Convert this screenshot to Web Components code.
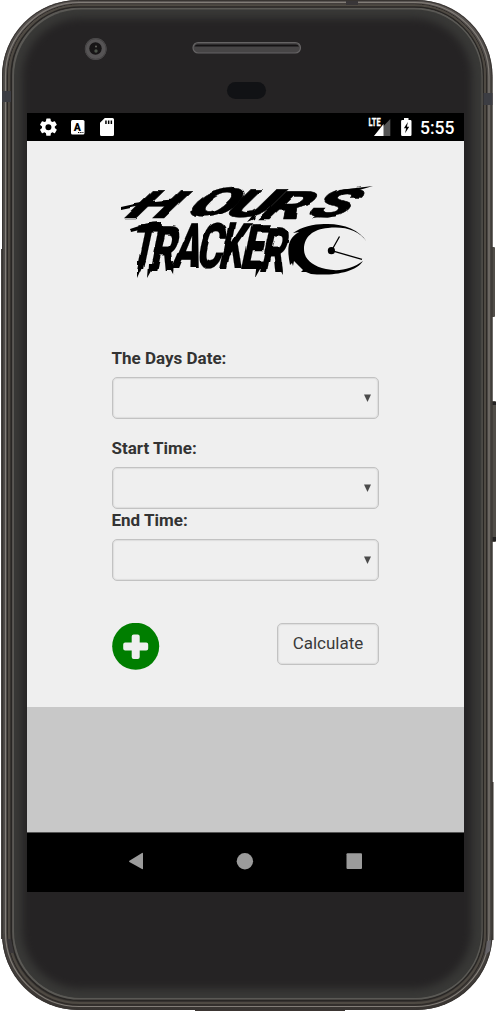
<!DOCTYPE html>
<html lang="en">
<head>
<meta charset="utf-8">
<title>Hours Tracker</title>
<style>
html,body{margin:0;height:100%;overflow:hidden;background:#fff;font-family:Roboto,"Liberation Sans",sans-serif}
</style>
</head>
<body>
<phone-frame>
  <status-bar>5:55</status-bar>
  <tracker-page>
    <hours-logo></hours-logo>
    <select-field style="margin-top:66px">The Days Date:</select-field>
    <select-field style="margin-top:18px">Start Time:</select-field>
    <select-field>End Time:</select-field>
    <form-actions>Calculate</form-actions>
  </tracker-page>
  <nav-bar></nav-bar>
</phone-frame>
<script>
const define = (name, html) => {
  const t = document.createElement('template');
  t.innerHTML = html;
  customElements.define(name, class extends HTMLElement {
    constructor() {
      super();
      this.attachShadow({mode: 'open'}).append(t.content.cloneNode(true));
    }
  });
};

define('phone-frame', `<style>
:host{display:block;position:relative;width:498px;height:1014px;overflow:hidden}
.art{position:absolute;inset:0}
.head{position:relative;height:113px}
.screen{position:relative;width:437px;height:779px;margin-left:27px;display:flex;flex-direction:column;background:#000}
</style>
<svg class="art" width="498" height="1014" viewBox="0 0 498 1014">
<defs>
<filter id="soft" color-interpolation-filters="sRGB" x="-5%" y="-5%" width="110%" height="110%"><feGaussianBlur stdDeviation="4"/></filter>
<linearGradient id="rim" x1="0" x2="0" y1="0" y2="1"><stop offset="0" stop-color="#5b5654"/><stop offset=".08" stop-color="#494643"/><stop offset=".92" stop-color="#494643"/><stop offset="1" stop-color="#393532"/></linearGradient>
<clipPath id="face"><rect x="14" y="9.500" width="467.500" height="988.500" rx="67"/></clipPath>
</defs>
<rect x="490" y="247" width="5" height="70" rx="1" fill="#514e49"/>
<rect x="490" y="401" width="6" height="141" rx="1" fill="#514e49"/>
<path d="M490 402h6v3h-6zM490 537h6v4h-6z" fill="#242323"/>
<rect x="1" y="249" width="3" height="690" fill="#45423f"/>
<rect x="489" y="782" width="4.500" height="158" fill="#37332f"/>
<rect x="195" y="1004" width="150" height="7" fill="#3b3532"/>
<rect x="2" y="0" width="490.500" height="1010" rx="76" fill="url(#rim)"/>
<rect x="2.500" y=".5" width="489.500" height="1009" rx="76" fill="none" stroke="#383431"/>
<rect x="5.500" y="2.500" width="483.500" height="1004" rx="74" fill="none" stroke="#827d77" stroke-width="1.200"/>
<rect x="7.500" y="4" width="479" height="1001" rx="72" fill="none" stroke="#2d2926" stroke-width="1"/>
<rect x="9" y="5.500" width="476" height="997.500" rx="71" fill="none" stroke="#4f4a43" stroke-width="2"/>
<rect x="11.200" y="7" width="472" height="993.500" rx="69" fill="none" stroke="#282624" stroke-width="1.600"/>
<rect x="13.500" y="9" width="468" height="989.500" rx="67" fill="none" stroke="#5a5955" stroke-width="2.200"/>
<g clip-path="url(#face)"><rect x="14" y="9" width="468" height="990" fill="#393937"/>
<rect x="22" y="18" width="450" height="971" rx="60" fill="#252324" filter="url(#soft)"/></g>
<path d="M2 91h9v11H2zM483.500 93h9v12h-9z" fill="#3c3d43"/>
<path d="M346 1h12v4h-12zM7 939h4l3 14h-4z" fill="#393638"/>
<path d="M487 941l4-1-1 11-5 4z" fill="#666469"/>
<circle cx="95.700" cy="49" r="10.900" fill="#565455"/><circle cx="95.700" cy="49" r="10.300" fill="none" stroke="#454344"/>
<circle cx="95.500" cy="48.500" r="6.200" fill="#171516"/><circle cx="96" cy="46.500" r="1" fill="#65665f"/><circle cx="96" cy="51" r="1.700" fill="#4b5349"/>
<rect x="193" y="42.500" width="107.500" height="10.500" rx="5.200" fill="#474546" stroke="#656364" stroke-width="1.200"/>
<path d="M197 44.500h99q2 0 3 2H194.500q1-2 2.500-2" fill="#151314"/>
<rect x="227" y="82" width="39" height="17" rx="8.500" fill="#111215"/>
</svg>
<div class="head"></div>
<div class="screen"><slot></slot></div>`);

define('status-bar', `<style>
:host{display:flex;align-items:center;height:28px;background:#000;color:#fff;box-sizing:border-box;padding:0 9.500px 0 12px;font:500 17.500px/28px Roboto,"Liberation Sans",sans-serif;border-bottom:0}
svg{display:block}.right{margin-left:auto;display:flex;align-items:center}
.time{margin-left:8.500px;padding-top:2px;line-height:26px}
</style>
<svg width="78" height="28" viewBox="39 113 78 28" fill="#fff">
<path transform="translate(38.100 116.900) scale(.86)" fill-rule="evenodd" d="M19.430 12.980c.04-.32.07-.64.07-.98s-.03-.66-.07-.98l2.110-1.650a.5.5 0 0 0 .12-.64l-2-3.460a.5.500 0 0 0-.61-.22l-2.490 1a7.300 7.300 0 0 0-1.690-.98l-.38-2.650A.49.49 0 0 0 14 2h-4a.49.49 0 0 0-.49.42l-.38 2.650c-.61.25-1.170.59-1.690.98l-2.490-1a.5.5 0 0 0-.61.22l-2 3.460a.5.5 0 0 0 .12.640l2.110 1.650a7.900 7.900 0 0 0 0 1.960l-2.110 1.650a.5.5 0 0 0-.12.640l2 3.460c.12.220.39.300.61.220l2.490-1c.52.400 1.080.730 1.690.980l.38 2.650c.03.240.24.420.49.420h4c.25 0 .46-.18.49-.42l.38-2.650c.61-.25 1.170-.59 1.690-.98l2.490 1c.23.090.49 0 .61-.22l2-3.460a.5.5 0 0 0-.12-.64zM12 15.500a3.500 3.500 0 1 1 0-7 3.500 3.500 0 0 1 0 7z"/>
<rect x="71" y="120" width="13.500" height="14.500" rx="1.500"/>
<text x="73.800" y="131" font-family="Roboto,sans-serif" font-weight="900" font-size="10.500" fill="#000">A</text>
<path d="M78 132h1.300v1H78zM80.200 132h1.300v1h-1.300zM82.400 132h1v1h-1z" fill="#000"/>
<path fill-rule="evenodd" d="M104.800 118h7.700q1.500 0 1.500 1.500v15q0 1.500-1.500 1.500h-11q-1.500 0-1.500-1.500V122.800zM105.200 120.500v3.500h1.500v-3.500zM107.900 120.500v3.500h1.500v-3.500zM110.600 120.500v3.500h1.500v-3.500z"/>
</svg>
<div class="right"><svg width="45" height="28" viewBox="367 113 45 28">
<path d="M390.300 119v17H374z" fill="#555"/><path d="M383.500 124v12H374z" fill="#fff"/><path d="M367 117h14v6l-4 4h-10z" fill="#000"/>
<text x="368.600" y="126.300" fill="#fff" stroke="#fff" stroke-width=".3" font-family="Roboto,sans-serif" font-weight="700" font-size="11" textLength="12" lengthAdjust="spacingAndGlyphs">LTE</text>
<path d="M404 118h4.500v2h1.800q1.200 0 1.200 1.200v13.500q0 1.300-1.200 1.300h-8q-1.200 0-1.200-1.300v-13.500q0-1.200 1.200-1.200h1.700z" fill="#fff"/>
<path d="M407.900 122l-4 6.300h2.200l-1 5 4.100-6.500h-2.300z" fill="#000"/>
</svg><div class="time"><slot></slot></div></div>`);

define('tracker-page', `<style>
:host{display:flex;flex-direction:column;height:691px;background:linear-gradient(#efefef 566px,#c8c8c8 566px);box-sizing:border-box;padding:41px 85px 0 84.500px}
</style><slot></slot>`);

define('hours-logo', `<style>:host{display:block;height:100px;margin-left:5.500px}svg{display:block;overflow:visible}text{font-family:Roboto,"Liberation Sans",sans-serif;font-weight:900;fill:#000;stroke:#000;stroke-linejoin:miter}</style>
<svg width="255" height="100" viewBox="117 182 255 100">
<defs><filter id="brush" x="-5%" y="-10%" width="110%" height="120%"><feTurbulence type="fractalNoise" baseFrequency=".06" numOctaves="1" seed="4" result="n"/><feDisplacementMap in="SourceGraphic" in2="n" scale="4" xChannelSelector="R" yChannelSelector="G"/><feGaussianBlur stdDeviation=".35"/></filter></defs>
<g filter="url(#brush)">
<text transform="translate(121 217.500) skewX(-46) scale(1.700 1)" x="0 34 57 79 106" y="0 -2 -1 1 -1" font-size="39" stroke-width=".4">HOURS</text>
<path d="M121 207q28-7 62-8l-5 4q-27 0-57 7zM339 190l34-4-31 9zM247 222l10-12-3 9zM312 218l12-7 6 5z"/>
<text transform="translate(128 271) skewX(-12) scale(.62 1)" x="0 33 70 107 143 180 210" y="-2 0 -3 -3 -3 -2 1" font-size="63" stroke-width=".2">TRACKER</text>
<path d="M130 228q15-6 31-6l0 6q-16 0-30 4zM138 261l8 0-8 18zM149 264l7 0-8 14zM166 262l8-1-1 14zM257 262l7 0-9 16zM276 263l6-1 1 13z"/>
</g>
<path d="M367 242C359 229 342 223 324 224c-10 0-23 3-31 9l6-1c-12 7-12 17-9 33l2-2 1 3 1-5 9 9-2 2 5 0 5 2c21 2 44-1 52-13-11 8-24 11-37 8-14-3-22-10-22-20 0-12 9-20 24-21 16-2 31 2 39 14z"/>
<path d="M331.500 250.700l8-14.200M331.500 250.700l30.500 8.600" stroke="#000" stroke-width="1.300"/><circle cx="331.400" cy="250.700" r="3.600"/>
</svg>`);

define('select-field', `<style>
:host{display:block;height:72px}
.label{font:700 17px/20px Roboto,"Liberation Sans",sans-serif;color:#333;height:29px}
.box{height:42px;border:1.500px solid #c2c2c2;border-radius:5px;box-sizing:border-box;display:flex;align-items:center;justify-content:flex-end;padding-right:7px;box-shadow:inset 0 0 1px 1px #ddd}
svg{display:block;margin-top:-1px}
</style><div class="label"><slot></slot></div><div class="box"><svg width="7" height="8"><path d="M0 .5h7L3.500 8z" fill="#4b4b4b"/></svg></div>`);

define('form-actions', `<style>
:host{display:flex;justify-content:space-between;margin-top:40.500px;align-items:flex-start}
button{width:102px;height:42px;padding:0 0 1px;margin:0;border:1.500px solid #c2c2c2;border-radius:5px;background:#efefef;color:#3a3a3a;box-shadow:inset 0 0 1px 1px #ddd;font:400 17px/20px Roboto,"Liberation Sans",sans-serif}
svg{display:block;margin-left:.5px}
</style><svg width="48" height="48"><circle cx="23.700" cy="23.300" r="23.500" fill="#007e00"/><path d="M21.700 11.500h4q2 0 2 2v6h6.500q2 0 2 2v4q0 2-2 2h-6.500v6.500q0 2-2 2h-4q-2 0-2-2v-6.500h-6.500q-2 0-2-2v-4q0-2 2-2h6.500v-6q0-2 2-2z" fill="#efefef"/></svg>
<button><slot></slot></button>`);

define('nav-bar', `<style>:host{display:block;height:60px;background:#000;box-sizing:border-box;border-top:1px solid #555}svg{display:block}</style>
<svg width="437" height="59" viewBox="27 833 437 59" fill="#9b9b9b"><path d="M143 853.500v15q0 1-1 .5l-12.600-7q-.8-.6 0-1.200L142 853q1-.5 1 .5"/><circle cx="244.900" cy="861.300" r="8.200"/><rect x="346.500" y="853.300" width="15.500" height="15.700" rx="1"/></svg>`);
</script>
</body>
</html>
